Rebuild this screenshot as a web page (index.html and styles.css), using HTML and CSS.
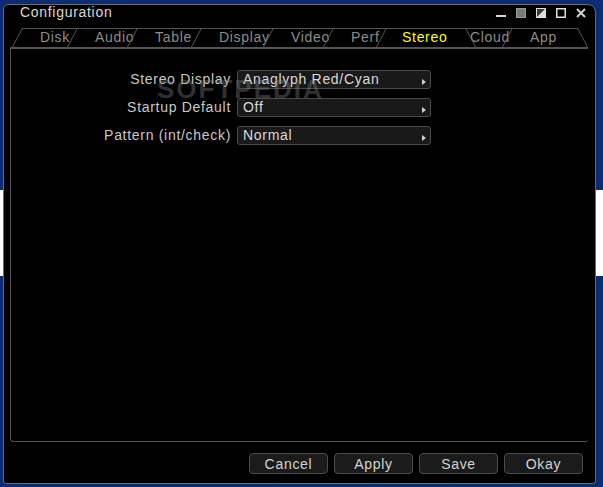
FILE: index.html
```html
<!DOCTYPE html>
<html lang="en">
<head>
    <meta charset="UTF-8">
    <meta name="viewport" content="width=device-width, initial-scale=1.0">
    <title>Configuration</title>
    <link rel="stylesheet" href="styles.css">
</head>
<body>
    <div class="window">
        <header class="title-bar">
            <h1 class="title">Configuration</h1>
            <div class="controls">
                <svg width="10" height="10" viewBox="0 0 10 10"><rect x="0" y="7" width="10" height="2" fill="#d8d8d8"/></svg>
                <svg width="10" height="10" viewBox="0 0 10 10"><rect x="0.5" y="0.5" width="9" height="9" fill="#7a7a7a" stroke="#9a9a9a"/></svg>
                <svg width="10" height="10" viewBox="0 0 10 10"><rect x="0.5" y="0.5" width="9" height="9" fill="#3a3a3a" stroke="#e0e0e0"/><polygon points="9.5,0.5 9.5,9.5 0.5,9.5" fill="#e0e0e0"/></svg>
                <svg width="10" height="10" viewBox="0 0 10 10"><rect x="0.75" y="0.75" width="8.5" height="8.5" fill="none" stroke="#e0e0e0" stroke-width="1.5"/></svg>
                <svg width="10" height="10" viewBox="0 0 10 10"><path d="M1 1 L9 9 M9 1 L1 9" stroke="#cfcfcf" stroke-width="2"/></svg>
            </div>
        </header>

        <nav class="tab-strip">
            <div class="tabs">
                <span class="tab">Disk</span>
                <span class="tab">Audio</span>
                <span class="tab">Table</span>
                <span class="tab">Display</span>
                <span class="tab">Video</span>
                <span class="tab">Perf</span>
                <span class="tab tab-active">Stereo</span>
                <span class="tab tab-tight">Cloud</span>
                <span class="tab">App</span>
            </div>
        </nav>

        <main class="panel">
            <div class="form">
                <label class="form-label">Stereo Display</label>
                <div class="select"><span>Anaglyph Red/Cyan</span><i class="arrow"></i></div>

                <label class="form-label">Startup Default</label>
                <div class="select"><span>Off</span><i class="arrow"></i></div>

                <label class="form-label">Pattern (int/check)</label>
                <div class="select"><span>Normal</span><i class="arrow"></i></div>

                <div class="watermark">SOFTPEDIA<sup>®</sup></div>
            </div>
        </main>

        <footer class="actions">
            <button class="btn">Cancel</button>
            <button class="btn">Apply</button>
            <button class="btn">Save</button>
            <button class="btn">Okay</button>
        </footer>
    </div>
</body>
</html>
```

FILE: styles.css
```css
:root {
    --desk-blue: #0b2b73;
    --line-color: #555555;
    --text-color: #cccccc;
    --tab-text: #8c8c8c;
    --field-bg: #191919;
    --field-border: #4a4a4a;
}

* {
    margin: 0;
    padding: 0;
    box-sizing: border-box;
}

body {
    height: 487px;
    overflow: hidden;
    font-family: 'Liberation Sans', Arial, sans-serif;
    font-size: 14px;
    letter-spacing: 0.7px;
    color: var(--text-color);
    /* 창 뒤쪽 배경 (흰 띠 포함) */
    background: linear-gradient(to bottom,
        var(--desk-blue) 0, var(--desk-blue) 190px,
        #ffffff 190px, #ffffff 276px,
        var(--desk-blue) 276px);
}

/* 창 */
.window {
    width: 593px;
    height: 480px;
    margin: 4px 0 0 3px;
    background-color: #000;
    border: 1px solid #6a6a6a;
    border-radius: 5px 8px 3px 3px;
    display: flex;
    flex-direction: column;
}

.title-bar {
    height: 23px;
    padding: 0 9px 0 16px;
    display: flex;
    justify-content: space-between;
    align-items: flex-start;
}

.title {
    font-size: 14px;
    font-weight: normal;
    line-height: 14px;
    color: #d8d8d8;
}

.controls {
    display: flex;
    gap: 10px;
    margin-top: 3px;
}

.controls svg {
    display: block;
}

/* 탭 */
.tab-strip {
    margin: 0 7px 0 6px;
    padding: 0 5px 0 7px;
    border-bottom: 2px solid var(--line-color);
}

.tabs {
    position: relative;
    display: grid;
    grid-template-columns: 55px 60px 64px 72px 60px 53px 89px 37px 76px;
    height: 19px;
}

.tabs::before {
    content: '';
    position: absolute;
    top: 0;
    left: 5px;
    right: 5px;
    height: 1px;
    background: var(--line-color);
}

.tab {
    position: relative;
    padding-left: 23px;
    line-height: 19px;
    color: var(--tab-text);
    white-space: nowrap;
}

.tab::before {
    content: '';
    position: absolute;
    top: 0;
    bottom: 0;
    left: 0;
    border-left: 1px solid var(--line-color);
    transform: skewX(-28deg);
}

.tab:last-child::after {
    content: '';
    position: absolute;
    top: 0;
    bottom: 0;
    right: 0;
    border-right: 1px solid var(--line-color);
    transform: skewX(28deg);
}

.tab-active {
    color: #ffff00;
    padding-left: 21px;
}

.tab-active + .tab::before {
    transform: skewX(28deg);
}

.tab-tight {
    padding-left: 0;
}

/* 본문 패널 */
.panel {
    flex: 1;
    margin: 0 7px 0 6px;
    border-left: 1px solid var(--line-color);
    border-bottom: 1px solid var(--line-color);
    border-radius: 0 0 3px 4px;
}

.form {
    position: relative;
    display: grid;
    grid-template-columns: 220px 194px;
    column-gap: 6px;
    row-gap: 9px;
    padding-top: 21px;
}

.form-label {
    text-align: right;
    line-height: 19px;
    color: #c8c8c8;
    white-space: nowrap;
}

.select {
    height: 19px;
    padding: 0 4px 0 5px;
    display: flex;
    align-items: center;
    background-color: var(--field-bg);
    border: 1px solid var(--field-border);
    border-radius: 3px;
    line-height: 17px;
    color: #dadada;
}

.arrow {
    margin-left: auto;
    margin-top: 4px;
    width: 0;
    height: 0;
    border-left: 4px solid #d0d0d0;
    border-top: 3px solid transparent;
    border-bottom: 3px solid transparent;
}

/* 워터마크 */
.watermark {
    position: absolute;
    left: 146px;
    top: 19px;
    font-size: 26px;
    line-height: 26px;
    font-weight: bold;
    letter-spacing: 2px;
    color: rgba(128, 128, 128, 0.4);
    pointer-events: none;
}

.watermark sup {
    font-size: 9px;
    font-weight: normal;
    letter-spacing: 0;
    vertical-align: 14px;
}

/* 하단 버튼 */
.actions {
    display: flex;
    justify-content: flex-end;
    gap: 6px;
    padding: 11px 12px 9px 0;
}

.btn {
    width: 79px;
    height: 21px;
    font-family: inherit;
    font-size: 14px;
    letter-spacing: 0.7px;
    color: #d4d4d4;
    background-color: #1b1b1b;
    border: 1px solid #4c4c4c;
    border-radius: 4px;
}
```
